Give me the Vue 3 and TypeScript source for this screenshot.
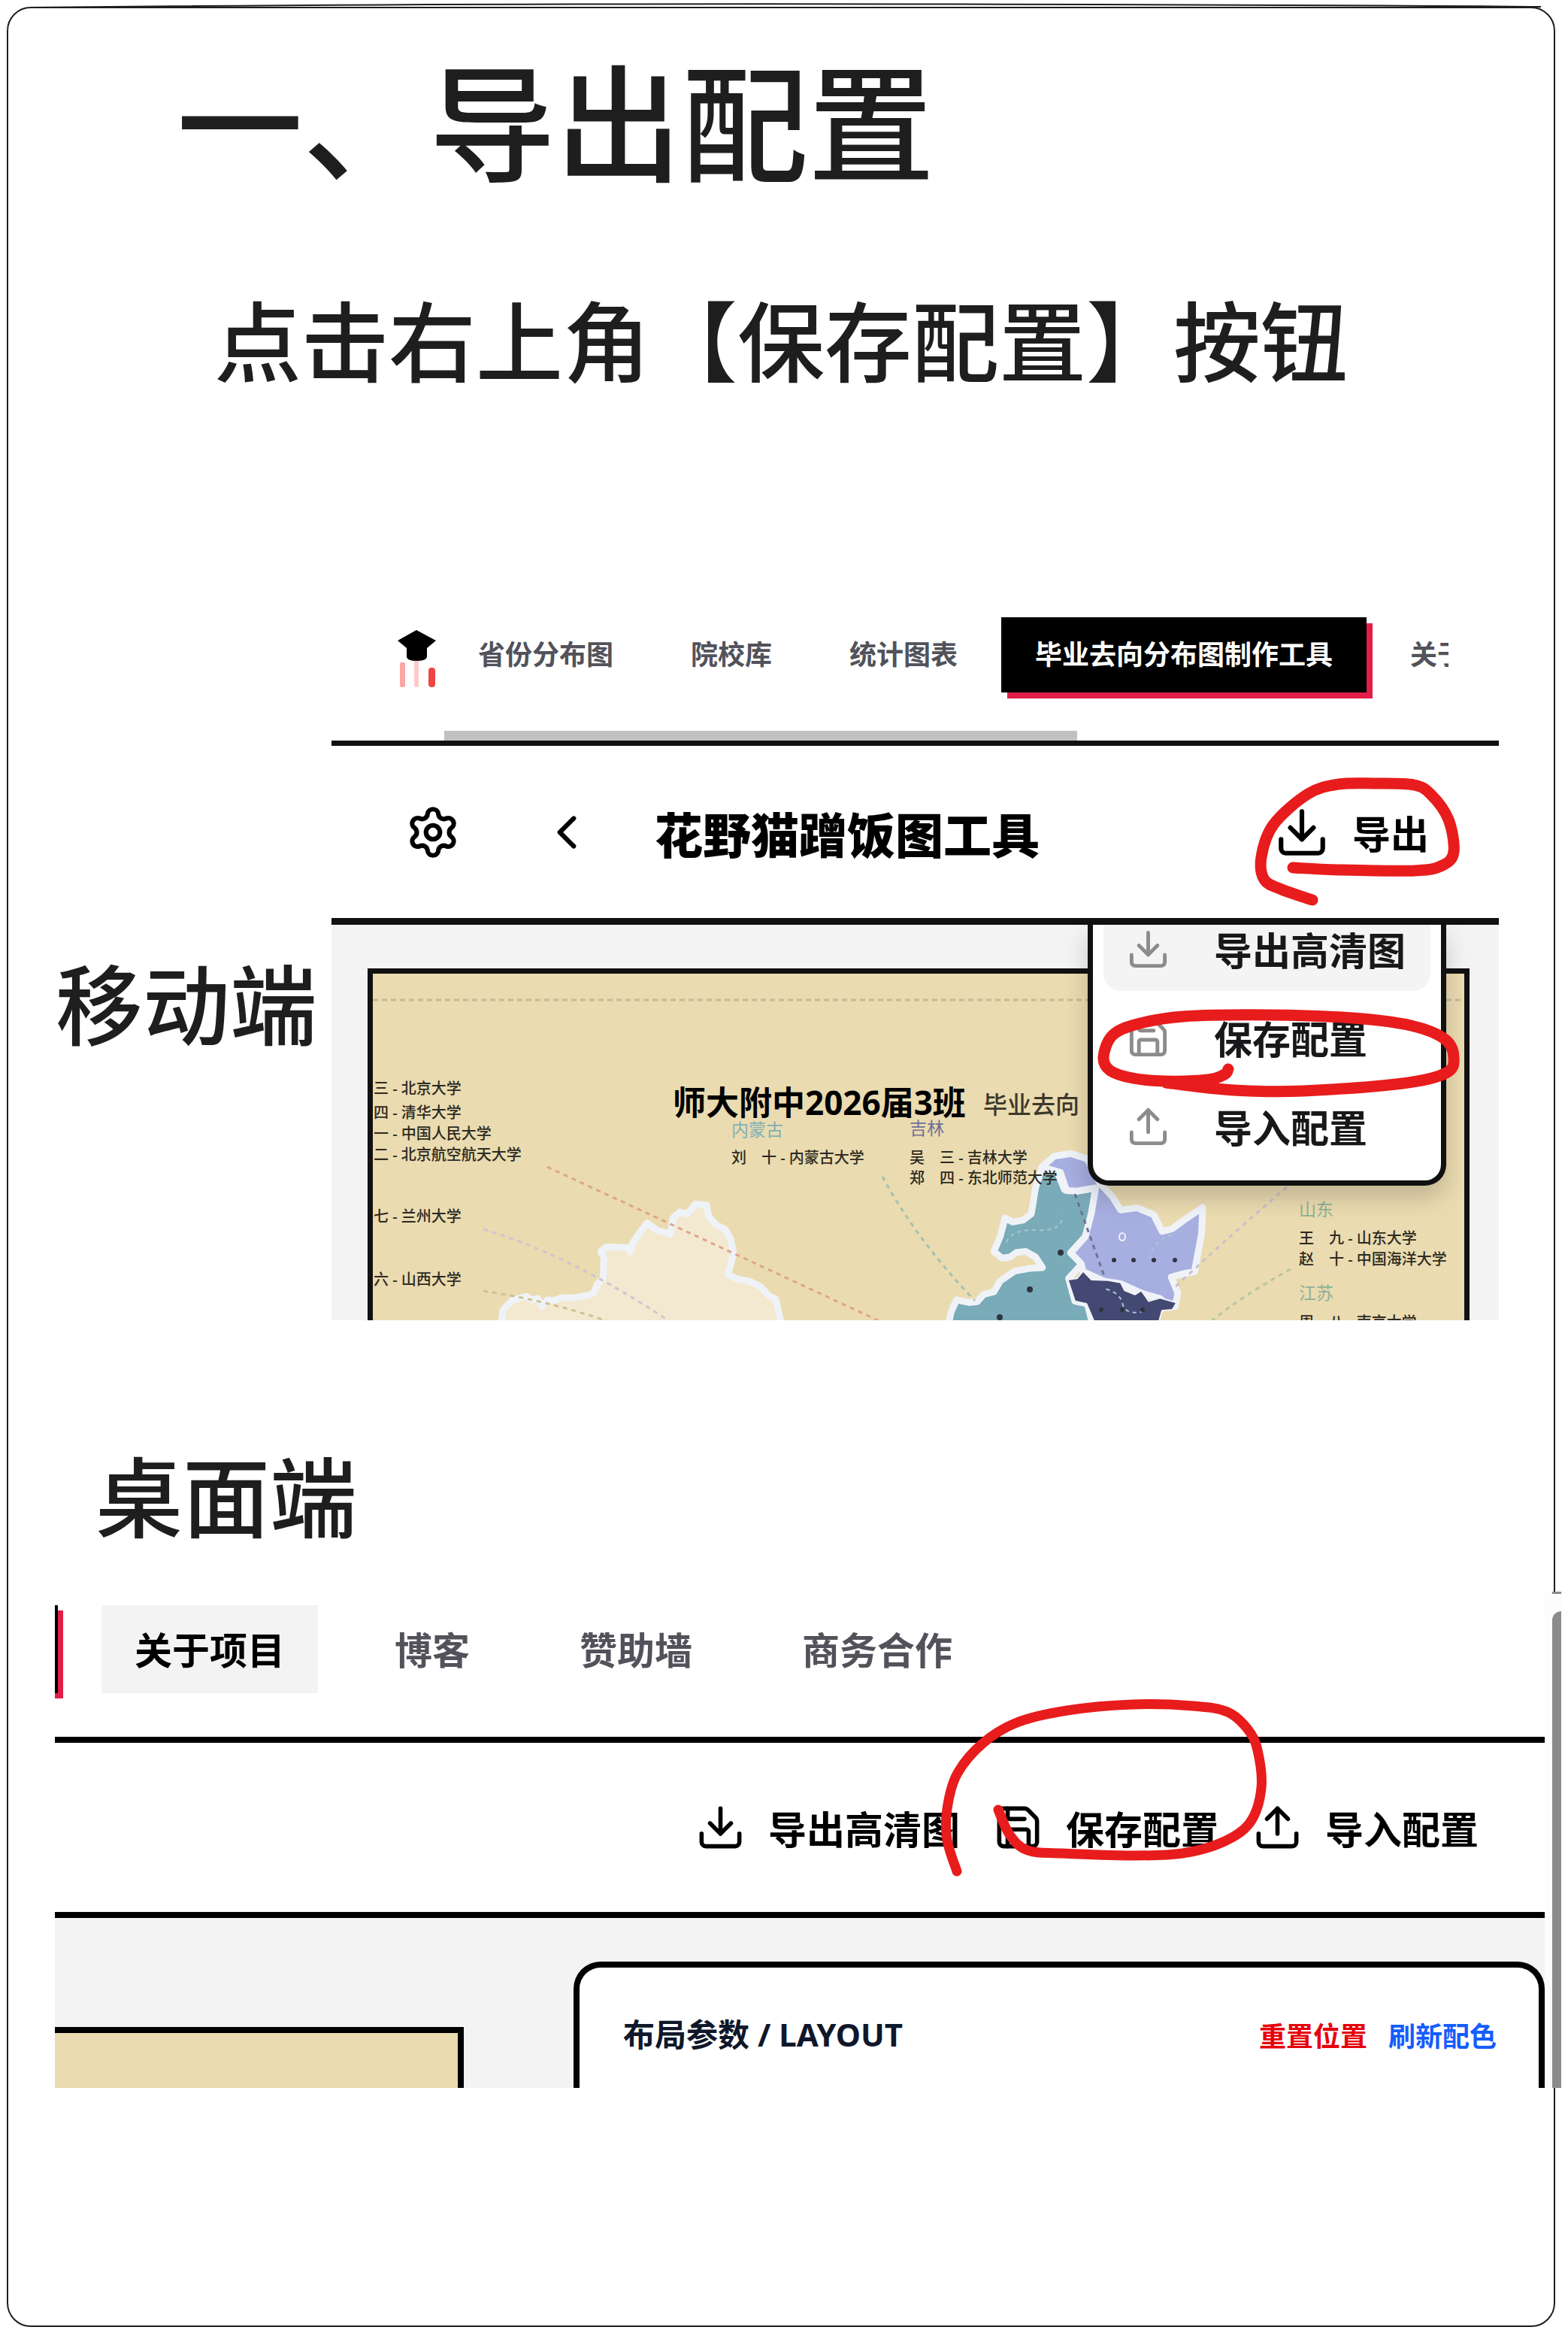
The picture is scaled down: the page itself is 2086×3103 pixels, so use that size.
<script setup lang="ts">
type Point = [number, number]

interface MapLabel {
  x: number
  y: number
  text: string
  kind?: string
}

/* Smooth freehand stroke through the given points (Catmull-Rom to Bezier). */
function stroke(points: Point[]): string {
  let d = `M${points[0][0]} ${points[0][1]}`
  for (let i = 0; i < points.length - 1; i++) {
    const p0 = points[i - 1] ?? points[i]
    const p1 = points[i]
    const p2 = points[i + 1]
    const p3 = points[i + 2] ?? p2
    const a = [p1[0] + (p2[0] - p0[0]) / 6, p1[1] + (p2[1] - p0[1]) / 6]
    const b = [p2[0] - (p3[0] - p1[0]) / 6, p2[1] - (p3[1] - p1[1]) / 6]
    d += `C${a[0]} ${a[1]} ${b[0]} ${b[1]} ${p2[0]} ${p2[1]}`
  }
  return d
}

const exportCircle = stroke([
  [1720, 1154], [1781, 1157], [1883, 1158], [1919, 1151], [1934, 1133], [1927, 1090],
  [1904, 1057], [1881, 1044], [1830, 1042], [1781, 1043], [1740, 1056], [1694, 1097],
  [1678, 1140], [1682, 1170], [1705, 1183], [1746, 1197],
])
const saveCircle = stroke([
  [1634, 1422], [1629, 1429], [1607, 1436], [1551, 1438], [1507, 1434], [1477, 1424],
  [1468, 1406], [1480, 1377], [1513, 1362], [1574, 1352], [1690, 1350], [1800, 1354],
  [1877, 1364], [1922, 1382], [1934, 1406], [1924, 1427], [1866, 1441], [1734, 1451],
  [1662, 1451], [1607, 1447], [1551, 1440],
])
const desktopCircle = stroke([
  [1328, 2407], [1343, 2440], [1367, 2461], [1413, 2465], [1507, 2468], [1573, 2465],
  [1627, 2450], [1663, 2424], [1678, 2378], [1673, 2328], [1660, 2300], [1633, 2277],
  [1587, 2269], [1507, 2267], [1420, 2275], [1353, 2291], [1307, 2319], [1273, 2360],
  [1260, 2406], [1260, 2447], [1273, 2489],
])

const icons: Record<string, string[]> = {
  download: ['M21 15v4a2 2 0 0 1-2 2H5a2 2 0 0 1-2-2v-4', 'M7 10l5 5 5-5', 'M12 15V3'],
  upload: ['M21 15v4a2 2 0 0 1-2 2H5a2 2 0 0 1-2-2v-4', 'M17 8l-5-5-5 5', 'M12 3v12'],
  save: [
    'M15.2 3a2 2 0 0 1 1.4.6l3.8 3.8a2 2 0 0 1 .6 1.4V19a2 2 0 0 1-2 2H5a2 2 0 0 1-2-2V5a2 2 0 0 1 2-2z',
    'M17 21v-7a1 1 0 0 0-1-1H8a1 1 0 0 0-1 1v7',
    'M7 3v4a1 1 0 0 0 1 1h7',
  ],
}

const mobileTabs = [
  { text: '省份分布图', active: false },
  { text: '院校库', active: false },
  { text: '统计图表', active: false },
  { text: '毕业去向分布图制作工具', active: true },
  { text: '关于项目', active: false },
]
const desktopTabs = [
  { text: '关于项目', hover: true },
  { text: '博客', hover: false },
  { text: '赞助墙', hover: false },
  { text: '商务合作', hover: false },
]
const actions = [
  { icon: 'download', text: '导出高清图' },
  { icon: 'save', text: '保存配置' },
  { icon: 'upload', text: '导入配置' },
]

const labels: MapLabel[] = [
  { x: 497, y: 1455, text: '三 - 北京大学' },
  { x: 497, y: 1487, text: '四 - 清华大学' },
  { x: 497, y: 1515, text: '一 - 中国人民大学' },
  { x: 497, y: 1543, text: '二 - 北京航空航天大学' },
  { x: 497, y: 1625, text: '七 - 兰州大学' },
  { x: 497, y: 1709, text: '六 - 山西大学' },
  { x: 973, y: 1511, text: '内蒙古', kind: 'teal' },
  { x: 1210, y: 1509, text: '吉林', kind: 'indigo' },
  { x: 973, y: 1547, text: '刘　十 - 内蒙古大学' },
  { x: 1210, y: 1547, text: '吴　三 - 吉林大学' },
  { x: 1210, y: 1574, text: '郑　四 - 东北师范大学' },
  { x: 1728, y: 1617, text: '山东', kind: 'green' },
  { x: 1728, y: 1654, text: '王　九 - 山东大学' },
  { x: 1728, y: 1682, text: '赵　十 - 中国海洋大学' },
  { x: 1728, y: 1728, text: '江苏', kind: 'green' },
  { x: 1728, y: 1766, text: '周　八 - 南京大学' },
]
</script>

<template>
  <div class="page">
    <main class="frame">
      <svg class="arch" viewBox="0 0 2086 12" preserveAspectRatio="none" aria-hidden="true">
        <path d="M40 10Q880 1 2050 9" />
      </svg>

      <h1 class="title">一、导出配置</h1>
      <p class="lead">点击右上角【保存配置】按钮</p>

      <section class="mobile-row">
        <h2 class="label mobile-label">移动端</h2>
        <div class="mobile">
          <div class="m-nav">
            <svg class="logo" viewBox="0 0 52 78" aria-hidden="true">
              <rect x="3" y="44" width="7" height="33" rx="2" fill="#fca5a5" />
              <rect x="22" y="38" width="6" height="39" rx="2" fill="#fecaca" />
              <rect x="41" y="51" width="9" height="26" rx="4" fill="#ef4444" />
              <path d="M25 1L51 15L39 25V37Q38 42 25 42Q13 42 12 37V25L0 15Z" fill="#000" />
            </svg>
            <div class="m-scroll">
              <nav class="m-tabs">
                <a v-for="t in mobileTabs" :key="t.text" href="#" :class="['m-tab', { on: t.active }]">{{ t.text }}</a>
              </nav>
              <div class="thumb"></div>
            </div>
          </div>

          <header class="m-head">
            <button class="icon-btn" aria-label="设置">
              <svg class="icon i-head" viewBox="0 0 24 24">
                <path d="M9.671 4.136a2.34 2.34 0 0 1 4.659 0 2.34 2.34 0 0 0 3.319 1.915 2.34 2.34 0 0 1 2.33 4.033 2.34 2.34 0 0 0 0 3.831 2.34 2.34 0 0 1-2.33 4.033 2.34 2.34 0 0 0-3.319 1.915 2.34 2.34 0 0 1-4.659 0 2.34 2.34 0 0 0-3.32-1.915 2.34 2.34 0 0 1-2.33-4.033 2.34 2.34 0 0 0 0-3.831A2.34 2.34 0 0 1 6.35 6.051a2.34 2.34 0 0 0 3.319-1.915" />
                <circle cx="12" cy="12" r="3" />
              </svg>
            </button>
            <button class="icon-btn back" aria-label="返回">
              <svg class="icon i-head" viewBox="0 0 24 24"><path d="M15 18l-6-6 6-6" /></svg>
            </button>
            <h3 class="m-title">花野猫蹭饭图工具</h3>
            <button class="action m-export">
              <svg class="icon i-head" viewBox="0 0 24 24"><path v-for="d in icons.download" :key="d" :d="d" /></svg>
              <span>导出</span>
            </button>
          </header>

          <div class="stage">
            <div class="map-card">
              <svg class="map" viewBox="496 1295 1453 461" preserveAspectRatio="xMinYMin slice">
                <path class="rule" d="M496 1330H1949" />
                <g transform="translate(430 1220) scale(.5102 .3571)">
                  <path class="land" fill="#f3e9d0" d="M450 1560L465 1500L468 1465L480 1445L495 1425L530 1412L545 1425L560 1420L570 1450L585 1425L600 1428L620 1418L650 1418L690 1408L705 1400L715 1365L730 1345L732 1270L724 1245L738 1228L795 1230L800 1248L806 1215L825 1175L845 1138L870 1165L905 1180L912 1120L930 1098L950 1105L970 1068L1000 1072L1005 1115L1025 1145L1050 1165L1063 1200L1070 1255L1055 1330L1080 1348L1110 1355L1140 1375L1162 1410L1180 1422L1188 1470L1200 1560Z" />
                </g>
                <g transform="translate(1220 1220) scale(.5525 .3571)">
                  <path class="land" fill="#79abb8" d="M70 1560L82 1470L95 1425L125 1435L145 1432L160 1405L185 1395L200 1355L235 1318L270 1308L302 1305L285 1265L262 1245L240 1248L225 1265L205 1270L185 1245L200 1190L212 1120L230 1135L255 1128L275 1105L280 1060L285 1010L300 935L330 918L355 1015L385 1020L430 1008L425 1100L405 1190L370 1250L398 1290L365 1345L380 1430L410 1440L430 1560Z" />
                  <path class="land" fill="#a7aee0" d="M300 930L330 890L370 880L410 900L440 990L470 1040L490 1090L530 1082L570 1108L590 1170L615 1160L650 1120L688 1080L685 1180L668 1320L640 1328L612 1340L628 1400L622 1450L600 1440L585 1420L540 1400L490 1365L450 1355L400 1320L395 1290L370 1250L405 1190L420 1100L430 1008L385 1020L360 1018L345 950Z" />
                  <path class="land thin" fill="#444973" d="M363 1350L385 1345L400 1318L420 1350L460 1352L490 1360L500 1390L525 1405L540 1390L558 1430L585 1418L625 1435L615 1462L590 1465L580 1520L430 1520L408 1440L380 1430Z" />
                  <path class="river" d="M215 1210Q230 1160 290 1165T350 1110M455 1385Q490 1400 495 1440T540 1470M560 1270Q570 1200 620 1180" />
                </g>
                <g class="links">
                  <path stroke="#dda58c" d="M728 1552L1172 1758" />
                  <path stroke="#cdc7d0" d="M643 1635Q760 1670 890 1757" />
                  <path stroke="#cfc194" d="M643 1717Q730 1730 810 1758" />
                  <path stroke="#a5c2ae" d="M1174 1565Q1220 1650 1297 1730" />
                  <path stroke="#c9c1cc" d="M1712 1579Q1640 1640 1563 1712" />
                  <path stroke="#b9c4a2" d="M1717 1688Q1650 1725 1612 1757" />
                  <path stroke="#6d7296" d="M1430 1588L1470 1700" />
                </g>
                <ellipse cx="1493" cy="1645" rx="4" ry="5" class="ring" />
                <g class="marks">
                  <circle cx="1482" cy="1676" r="3" /><circle cx="1508" cy="1676" r="3" />
                  <circle cx="1535" cy="1676" r="3" /><circle cx="1563" cy="1676" r="3" />
                  <circle cx="1411" cy="1666" r="4" /><circle cx="1370" cy="1715" r="4" />
                  <circle cx="1330" cy="1752" r="4" /><circle cx="1465" cy="1742" r="3" />
                  <circle cx="1493" cy="1742" r="3" /><circle cx="1520" cy="1742" r="3" />
                </g>
                <text v-for="l in labels" :key="l.text" :x="l.x" :y="l.y" :class="['ml', l.kind]">{{ l.text }}</text>
                <text x="895" y="1483" class="map-title">师大附中2026届3班</text>
                <text x="1308" y="1481" class="map-sub">毕业去向</text>
              </svg>
            </div>
            <div class="menu">
              <button v-for="(a, i) in actions" :key="a.text" :class="['item', { hot: i === 0 }]">
                <svg class="icon i-menu" viewBox="0 0 24 24"><path v-for="d in icons[a.icon]" :key="d" :d="d" /></svg>
                <span>{{ a.text }}</span>
              </button>
            </div>
          </div>

          <svg class="pen pen-mobile" viewBox="1454 1020 540 460" aria-hidden="true">
            <path :d="exportCircle" />
            <path :d="saveCircle" />
          </svg>
        </div>
      </section>

      <h2 class="label desktop-label">桌面端</h2>

      <section class="desktop">
        <div class="d-main">
          <nav class="d-nav">
            <span class="d-edge"></span>
            <a v-for="t in desktopTabs" :key="t.text" href="#" :class="['d-tab', { on: t.hover }]">{{ t.text }}</a>
          </nav>
          <div class="d-tools">
            <button v-for="a in actions" :key="a.text" class="action">
              <svg class="icon i-tool" viewBox="0 0 24 24"><path v-for="d in icons[a.icon]" :key="d" :d="d" /></svg>
              <span>{{ a.text }}</span>
            </button>
          </div>
          <div class="d-body">
            <div class="d-map"></div>
            <aside class="d-panel">
              <h3>布局参数 / LAYOUT</h3>
              <div class="d-links">
                <button class="reset">重置位置</button>
                <button class="refresh">刷新配色</button>
              </div>
            </aside>
          </div>
          <svg class="pen pen-desktop" viewBox="1240 2240 460 270" aria-hidden="true">
            <path :d="desktopCircle" />
          </svg>
        </div>
        <div class="rail"><div class="rail-cap"></div><div class="rail-thumb"></div></div>
      </section>
    </main>
  </div>
</template>

<style>
body {
  background: #fff;
}
</style>

<style scoped>
* {
  box-sizing: border-box;
}

.page {
  position: relative;
  min-height: 100vh;
  padding: 9px 17px 8px 9px;
  font-family: "Noto Sans", "Noto Sans CJK SC", sans-serif;
  color: #1e1e1e;
  overflow: hidden;
}

.frame {
  padding: 45px 0 316px;
  border: 2px solid #1e1e1e;
  border-radius: 32px;
}

.arch {
  position: absolute;
  top: 0;
  left: 0;
  width: 100%;
  height: 12px;
  fill: none;
  stroke: #1e1e1e;
  stroke-width: 2;
}

h1, h2, h3, p {
  margin: 0;
}

button {
  padding: 0;
  border: 0;
  background: none;
  font: inherit;
  color: inherit;
  white-space: nowrap;
}

a {
  color: inherit;
  text-decoration: none;
  white-space: nowrap;
}

.title,
.lead,
.label {
  font-family: "Noto Sans CJK SC", sans-serif;
  font-weight: 500;
  white-space: nowrap;
}

.title {
  padding-left: 224px;
  font-size: 168px;
  line-height: 200px;
}

.lead {
  margin-top: 122px;
  padding-left: 274px;
  font-size: 116px;
  line-height: 140px;
}

.label {
  font-size: 116px;
  line-height: 140px;
}

.icon {
  display: block;
  flex: none;
  fill: none;
  stroke: currentColor;
  stroke-width: 2;
  stroke-linecap: round;
  stroke-linejoin: round;
}

.i-head {
  width: 74px;
  height: 74px;
}

.i-tool {
  width: 67px;
  height: 67px;
}

.i-menu {
  width: 59px;
  height: 59px;
  color: #8c8c8c;
}

.pen {
  position: absolute;
  fill: none;
  stroke: #e81c1c;
  stroke-width: 15;
  stroke-linecap: round;
  stroke-linejoin: round;
  pointer-events: none;
}

.mobile-row {
  display: flex;
  margin-top: 282px;
  padding-right: 73px;
}

.mobile-label {
  flex: none;
  width: 430px;
  margin-top: 460px;
  padding-left: 63px;
}

.mobile {
  position: relative;
  flex: 1;
  min-width: 0;
}

.m-nav {
  display: flex;
  height: 192px;
  padding: 0 67px 0 88px;
  border-bottom: 7px solid #111;
}

.logo {
  flex: none;
  width: 52px;
  height: 78px;
  margin: 37px 10px 0 0;
}

.m-scroll {
  display: flex;
  flex: 1;
  flex-direction: column;
  justify-content: space-between;
  min-width: 0;
  padding-top: 21px;
}

.m-tabs {
  display: flex;
  gap: 13px;
  padding-bottom: 12px;
  overflow: hidden;
}

.m-tab {
  flex: none;
  padding: 0 45px;
  font-size: 36px;
  font-weight: 700;
  line-height: 100px;
  color: #52525b;
}

.m-tab.on {
  background: #000;
  box-shadow: 8px 8px 0 #e11d48;
  color: #fff;
}

.thumb {
  width: 63%;
  height: 13px;
  background: #c1c1c1;
}

.m-head {
  display: flex;
  align-items: center;
  height: 238px;
  padding: 0 93px 0 98px;
  border-bottom: 9px solid #111;
  color: #000;
}

.back {
  margin-left: 104px;
}

.m-title {
  margin-left: 80px;
  padding-top: 8px;
  font-size: 64px;
  font-weight: 900;
  line-height: 80px;
  white-space: nowrap;
}

.action {
  display: flex;
  align-items: center;
  gap: 30px;
  font-size: 51px;
  font-weight: 700;
  line-height: 64px;
  color: #000;
}

.action span {
  padding-top: 4px;
}

.m-export {
  margin-left: auto;
}

.stage {
  position: relative;
  height: 526px;
  padding: 58px 39px 0 48px;
  overflow: hidden;
  background: #f3f3f3;
}

.map-card {
  border: 7px solid #111;
  border-bottom: 0;
  background: #eadbb0;
}

.map {
  display: block;
  width: 100%;
  height: 461px;
}

.rule {
  stroke: #c6ba98;
  stroke-width: 3;
  stroke-dasharray: 7 5;
}

.land {
  stroke: #eff3f8;
  stroke-width: 9;
  stroke-linejoin: round;
  vector-effect: non-scaling-stroke;
}

.land.thin {
  stroke-width: 2;
}

.river {
  fill: none;
  stroke: #a9c6d4;
  stroke-width: 2;
  stroke-dasharray: 5 5;
  vector-effect: non-scaling-stroke;
}

.links {
  fill: none;
  stroke-width: 3;
  stroke-dasharray: 6 6;
}

.ring {
  fill: none;
  stroke: #eff3f8;
  stroke-width: 2;
}

.marks {
  fill: #2f3340;
}

.ml {
  font-size: 20px;
  font-weight: 500;
  fill: #2d2a22;
}

.ml.teal,
.ml.indigo,
.ml.green {
  font-size: 23px;
  font-weight: 400;
  fill: #7fb0b4;
}

.ml.indigo {
  fill: #6f6e98;
}

.ml.green {
  fill: #90b095;
}

.map-title {
  font-size: 44px;
  font-weight: 700;
  fill: #000;
}

.map-sub {
  font-size: 32px;
  font-weight: 500;
  fill: #3d382c;
}

.menu {
  position: absolute;
  top: 0;
  right: 70px;
  display: flex;
  flex-direction: column;
  gap: 6px;
  width: 477px;
  padding: 0 14px 16px;
  overflow: hidden;
  border: 7px solid #111;
  border-top: 0;
  border-radius: 0 0 28px 28px;
  background: #fff;
  box-shadow: 0 16px 30px rgba(0, 0, 0, 0.18);
}

.item {
  display: flex;
  align-items: center;
  gap: 58px;
  height: 112px;
  padding: 0 30px;
  border-radius: 24px;
  font-size: 51px;
  font-weight: 700;
  color: #18181b;
}

.item.hot {
  margin-top: -24px;
  background: #f4f4f4;
}

.pen-mobile {
  top: 220px;
  right: 0;
  width: 540px;
  height: 460px;
}

.desktop-label {
  margin-top: 159px;
  padding-left: 116px;
}

.desktop {
  position: relative;
  display: flex;
  margin: 62px -10px 0 62px;
  background: #fff;
}

.d-main {
  position: relative;
  flex: 1;
  min-width: 0;
}

.d-nav {
  display: flex;
  gap: 58px;
  height: 201px;
  padding-top: 18px;
  border-bottom: 8px solid #000;
}

.d-edge {
  width: 4px;
  height: 117px;
  background: #000;
  box-shadow: 0 7px 0 #e11d48, 4px 7px 0 #e11d48, 7px 7px 0 #e11d48;
}

.d-tab {
  height: 117px;
  padding: 2px 44px 0;
  font-size: 50px;
  font-weight: 700;
  line-height: 117px;
  color: #52525b;
}

.d-tab.on {
  background: #f3f3f3;
  color: #000;
}

.d-tools {
  display: flex;
  align-items: center;
  justify-content: flex-end;
  gap: 44px;
  height: 233px;
  padding-right: 88px;
  border-bottom: 8px solid #000;
}

.d-body {
  display: flex;
  justify-content: space-between;
  height: 226px;
  background: #f3f3f3;
}

.d-map {
  width: 544px;
  margin-top: 145px;
  border: solid #000;
  border-width: 8px 8px 0 0;
  background: #eadbb0;
}

.d-panel {
  display: flex;
  align-items: flex-start;
  justify-content: space-between;
  width: 1292px;
  margin-top: 58px;
  padding: 57px 56px 0 58px;
  border: 8px solid #000;
  border-bottom: 0;
  border-radius: 36px 36px 0 0;
  background: #fff;
}

.d-panel h3 {
  font-size: 42px;
  font-weight: 700;
  line-height: 64px;
  color: #0f172a;
}

.d-links {
  display: flex;
  gap: 28px;
  padding-top: 3px;
  font-size: 36px;
  font-weight: 700;
  line-height: 64px;
}

.reset {
  color: #e7000b;
}

.refresh {
  color: #155dfc;
}

.pen-desktop {
  top: 123px;
  right: 355px;
  width: 460px;
  height: 270px;
  stroke-width: 13;
}

.rail {
  display: flex;
  flex-direction: column;
  width: 22px;
  padding-left: 10px;
  background: #fcfcfc;
}

.rail-cap {
  height: 3px;
  margin-bottom: 23px;
  background: #8b8b8b;
}

.rail-thumb {
  flex: 1;
  border-radius: 12px 0 0 0;
  background: #8b8b8b;
}
</style>
